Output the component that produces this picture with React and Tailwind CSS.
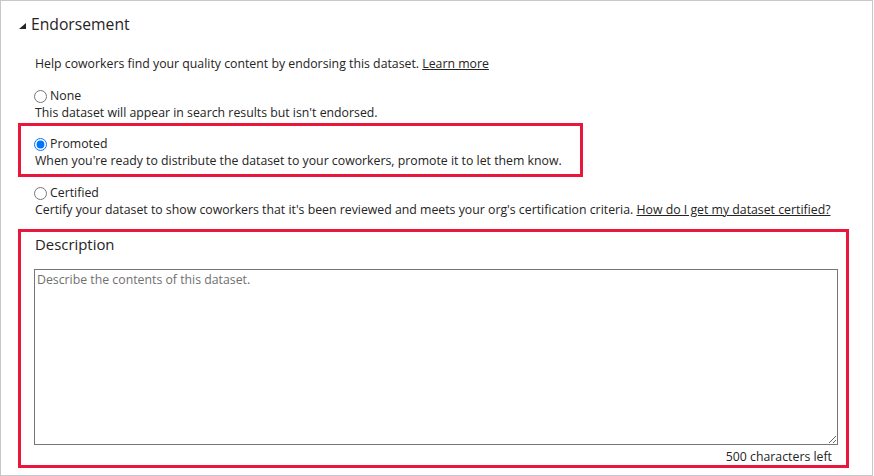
import React from "react";

const Radio = ({ label, checked, name }) => (
  <label className="flex h-[18px] items-center gap-[3px]">
    <input
      type="radio"
      name={name}
      defaultChecked={checked}
      className="h-[13px] w-[13px]"
    />
    <span>{label}</span>
  </label>
);

export default function App() {
  return (
    <div className="h-[476px] w-[873px] overflow-hidden border border-[#c8c8c8] bg-white font-['Open_Sans',sans-serif] text-[12.3px] leading-[16px] text-[#252423]">
      {/* Header */}
      <div className="ml-[18px] mt-[11px] flex h-[24px] items-center gap-[5px]">
        <svg width="7" height="6" viewBox="0 0 7 6" className="mt-[3px]">
          <polygon points="7,0 7,6 0,6" fill="#252423" />
        </svg>
        <span className="text-[15.7px] leading-[24px]">Endorsement</span>
      </div>

      <div className="ml-[34px] mt-[20px] whitespace-nowrap">
        Help coworkers find your quality content by endorsing this dataset.{" "}
        <a href="#" className="underline">
          Learn more
        </a>
      </div>

      {/* None */}
      <div className="ml-[33px] mt-[15px]">
        <Radio name="endorse" label="None" />
        <div className="whitespace-nowrap pl-[1px]">
          This dataset will appear in search results but isn't endorsed.
        </div>
      </div>

      {/* Promoted */}
      <div className="ml-[17px] mt-[2px] w-[565px] border-[3px] border-[#e8173b] pb-[5px] pl-[13px] pt-[9px]">
        <Radio name="endorse" label="Promoted" checked />
        <div className="whitespace-nowrap pl-[1px]">
          When you're ready to distribute the dataset to your coworkers,
          promote it to let them know.
        </div>
      </div>

      {/* Certified */}
      <div className="ml-[33px] mt-[7px]">
        <Radio name="endorse" label="Certified" />
        <div className="whitespace-nowrap pl-[1px]">
          Certify your dataset to show coworkers that it's been reviewed and
          meets your org's certification criteria.{" "}
          <a href="#" className="underline">
            How do I get my dataset certified?
          </a>
        </div>
      </div>

      {/* Description */}
      <div className="ml-[17px] mt-[11px] h-[239px] w-[831px] border-[3px] border-[#e8173b] pl-[13px] pr-[8px]">
        <div className="pl-[1px] pt-[1px] text-[14.9px] leading-[22px]">
          Description
        </div>
        <textarea
          placeholder="Describe the contents of this dataset."
          className="mt-[14px] block h-[176px] w-[804px] border border-[#767676] px-[2px] py-[2px] text-[12.3px] leading-[16px] placeholder:text-[#707070]"
        />
        <div className="mt-[4px] w-[804px] pr-[6px] text-right">
          500 characters left
        </div>
      </div>
    </div>
  );
}
